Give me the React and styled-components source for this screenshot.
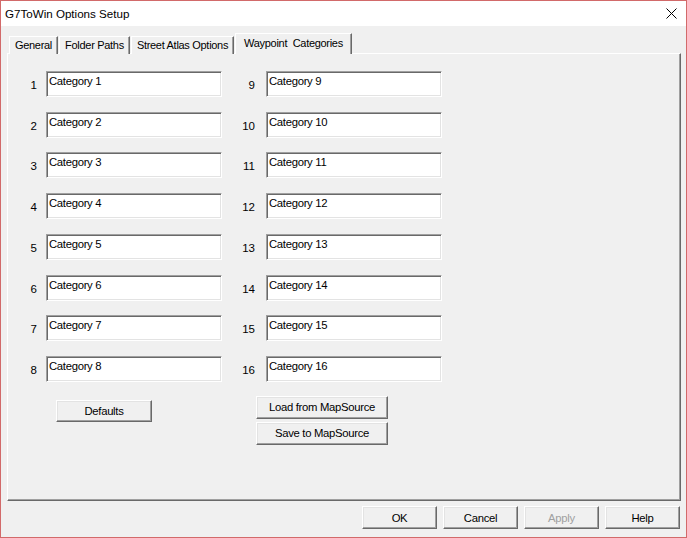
import React from "react";
import styled, { createGlobalStyle } from "styled-components";

const GlobalStyle = createGlobalStyle`
    html, body { margin: 0; padding: 0; background: #f0f0f0; }
    * { box-sizing: border-box; }
`

const WinFont = `"Liberation Sans", Arial, sans-serif`;

const Window = styled.div`
    width: 687px;
    height: 538px;
    border: 1px solid #d26a6a;
    display: flex;
    flex-direction: column;
    background: #f0f0f0;
    font-family: ${WinFont};
    color: #000;
`

const TitleBar = styled.div`
    height: 25px;
    background: #fff;
    display: flex;
    align-items: center;
    justify-content: space-between;
    padding: 0 9px 0 4px;
`

const TitleText = styled.div`
    font-size: 11.6px;
    padding-bottom: 1px;
`

const CloseButton = styled.div`
    width: 12px;
    height: 12px;
    display: flex;
    align-items: center;
    justify-content: center;
    margin-bottom: 1px;
`

const Body = styled.div`
    flex: 1;
    display: flex;
    flex-direction: column;
    padding: 7px 5px 0 6px;
`

const TabStrip = styled.div`
    height: 21px;
    display: flex;
    align-items: flex-end;
    padding-left: 2px;
    position: relative;
    z-index: 1;
    margin-bottom: -1px;
`

const Tab = styled.div`
    width: ${p => p.$w}px;
    height: ${p => (p.$active ? 21 : 18)}px;
    margin-right: ${p => p.$gap || 0}px;
    background: #f0f0f0;
    border-top: 1px solid #fff;
    border-left: 1px solid #fff;
    border-right: 1px solid #696969;
    box-shadow: inset -1px 0 #a0a0a0;
    font-size: 11px;
    letter-spacing: -0.3px;
    display: flex;
    justify-content: center;
    padding-top: ${p => (p.$active ? 3 : 2)}px;
    white-space: pre;
`

const Panel = styled.div`
    width: 674px;
    height: 448px;
    border-top: 1px solid #fff;
    border-left: 1px solid #fff;
    border-right: 1px solid #696969;
    border-bottom: 1px solid #696969;
    box-shadow: inset -1px -1px #a0a0a0;
    padding-top: 17px;
`

const Columns = styled.div`
    display: flex;
`

const Column = styled.div`
    display: flex;
    flex-direction: column;
    gap: 14.71px;
`

const Row = styled.div`
    display: flex;
    height: 26px;
`

const Label = styled.div`
    width: ${p => p.$w}px;
    padding-right: ${p => p.$pad}px;
    padding-top: 8px;
    text-align: right;
    font-size: 11.5px;
`

const Field = styled.textarea`
    width: 176px;
    height: 26px;
    margin: 0;
    resize: none;
    overflow: hidden;
    background: #fff;
    border: 1px solid;
    border-color: #a0a0a0 #fff #fff #a0a0a0;
    box-shadow: inset 1px 1px #696969, inset -1px -1px #e3e3e3;
    font-family: ${WinFont};
    font-size: 11.3px;
    letter-spacing: -0.3px;
    line-height: 13px;
    padding: 3px 2px 0 2px;
    color: #000;
    outline: none;
`

const ButtonArea = styled.div`
    display: flex;
    margin-top: 14px;
`

const LeftButtons = styled.div`
    width: 248px;
    padding: 4px 0 0 48px;
`

const RightButtons = styled.div`
    display: flex;
    flex-direction: column;
    gap: 3px;
`

const Button = styled.button`
    width: ${p => p.$w}px;
    height: ${p => p.$h || 23}px;
    margin: 0;
    padding: 0;
    background: #f0f0f0;
    border: 1px solid;
    border-color: #fff #696969 #696969 #fff;
    box-shadow: inset -1px -1px #a0a0a0, inset 1px 1px #e3e3e3;
    font-family: ${WinFont};
    font-size: 11.3px;
    letter-spacing: -0.3px;
    color: ${p => (p.disabled ? "#a0a0a0" : "#000")};
`

const DialogButtons = styled.div`
    display: flex;
    justify-content: flex-end;
    gap: 6px;
    margin-top: 5px;
    padding-right: 1px;
`

const leftItems = [1, 2, 3, 4, 5, 6, 7, 8];
const rightItems = [9, 10, 11, 12, 13, 14, 15, 16];

const App = () => {
    return (
        <>
            <GlobalStyle />
            <Window>
                <TitleBar>
                    <TitleText>G7ToWin Options Setup</TitleText>
                    <CloseButton>
                        <svg width="11" height="11" viewBox="0 0 11 11">
                            <path d="M0.5 0.5 L10.5 10.5 M10.5 0.5 L0.5 10.5" stroke="#000" strokeWidth="1" />
                        </svg>
                    </CloseButton>
                </TitleBar>
                <Body>
                    <TabStrip>
                        <Tab $w={49} $gap={1}>General</Tab>
                        <Tab $w={71} $gap={1}>Folder Paths</Tab>
                        <Tab $w={103} $gap={1}>Street Atlas Options</Tab>
                        <Tab $w={117} $active>{"Waypoint  Categories"}</Tab>
                    </TabStrip>
                    <Panel>
                        <Columns>
                            <Column>
                                {leftItems.map(n => (
                                    <Row key={n}>
                                        <Label $w={38} $pad={9}>{n}</Label>
                                        <Field readOnly value={`Category ${n}`} />
                                    </Row>
                                ))}
                            </Column>
                            <Column>
                                {rightItems.map(n => (
                                    <Row key={n}>
                                        <Label $w={44} $pad={11}>{n}</Label>
                                        <Field readOnly value={`Category ${n}`} />
                                    </Row>
                                ))}
                            </Column>
                        </Columns>
                        <ButtonArea>
                            <LeftButtons>
                                <Button $w={96} $h={22}>Defaults</Button>
                            </LeftButtons>
                            <RightButtons>
                                <Button $w={132}>Load from MapSource</Button>
                                <Button $w={132}>Save to MapSource</Button>
                            </RightButtons>
                        </ButtonArea>
                    </Panel>
                    <DialogButtons>
                        <Button $w={75}>OK</Button>
                        <Button $w={75}>Cancel</Button>
                        <Button $w={75} disabled>Apply</Button>
                        <Button $w={75}>Help</Button>
                    </DialogButtons>
                </Body>
            </Window>
        </>
    )
}

export default App;
